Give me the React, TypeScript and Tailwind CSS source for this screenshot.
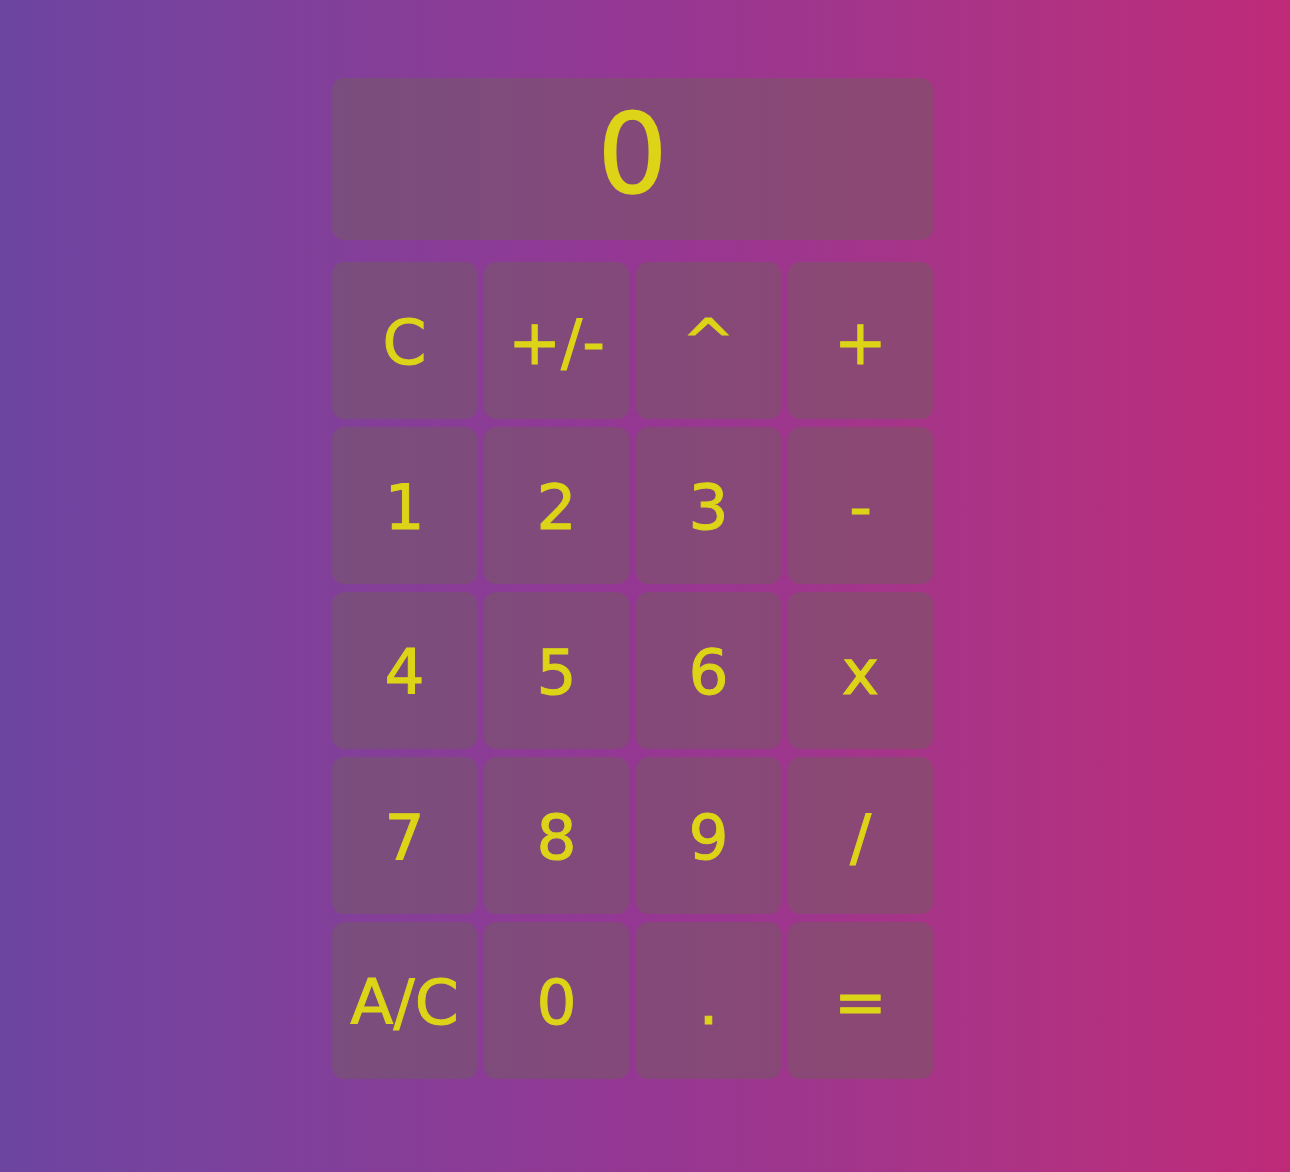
import React from "react";

const keys = [
  "C", "+/-", "^", "+",
  "1", "2", "3", "-",
  "4", "5", "6", "x",
  "7", "8", "9", "/",
  "A/C", "0", ".", "=",
];

const App: React.FC = () => (
  <div
    className="min-h-[1172px] w-full bg-gradient-to-r from-[#6c45a1] via-[#953793] to-[#be2a78] pt-[78px] flex justify-center pr-[25px]"
    style={{ fontFamily: '"DejaVu Sans", Verdana, sans-serif' }}
  >
    <div className="w-[601px]">
      <div className="h-[162px] rounded-xl bg-[rgba(110,95,90,0.45)] flex items-center justify-center pb-[10px] text-[110px] leading-none text-[#ddd418] [-webkit-text-stroke:1.5px_#ddd418]">
        0
      </div>
      <div className="mt-[22px] grid grid-cols-4 gap-x-[7px] gap-y-[8px]">
        {keys.map((k) => (
          <button
            key={k}
            className="h-[157px] rounded-xl bg-[rgba(110,95,90,0.45)] flex items-center justify-center text-[63px] text-[#ddd418] pt-[6px] [-webkit-text-stroke:1px_#ddd418]"
          >
            {k}
          </button>
        ))}
      </div>
    </div>
  </div>
);

export default App;
